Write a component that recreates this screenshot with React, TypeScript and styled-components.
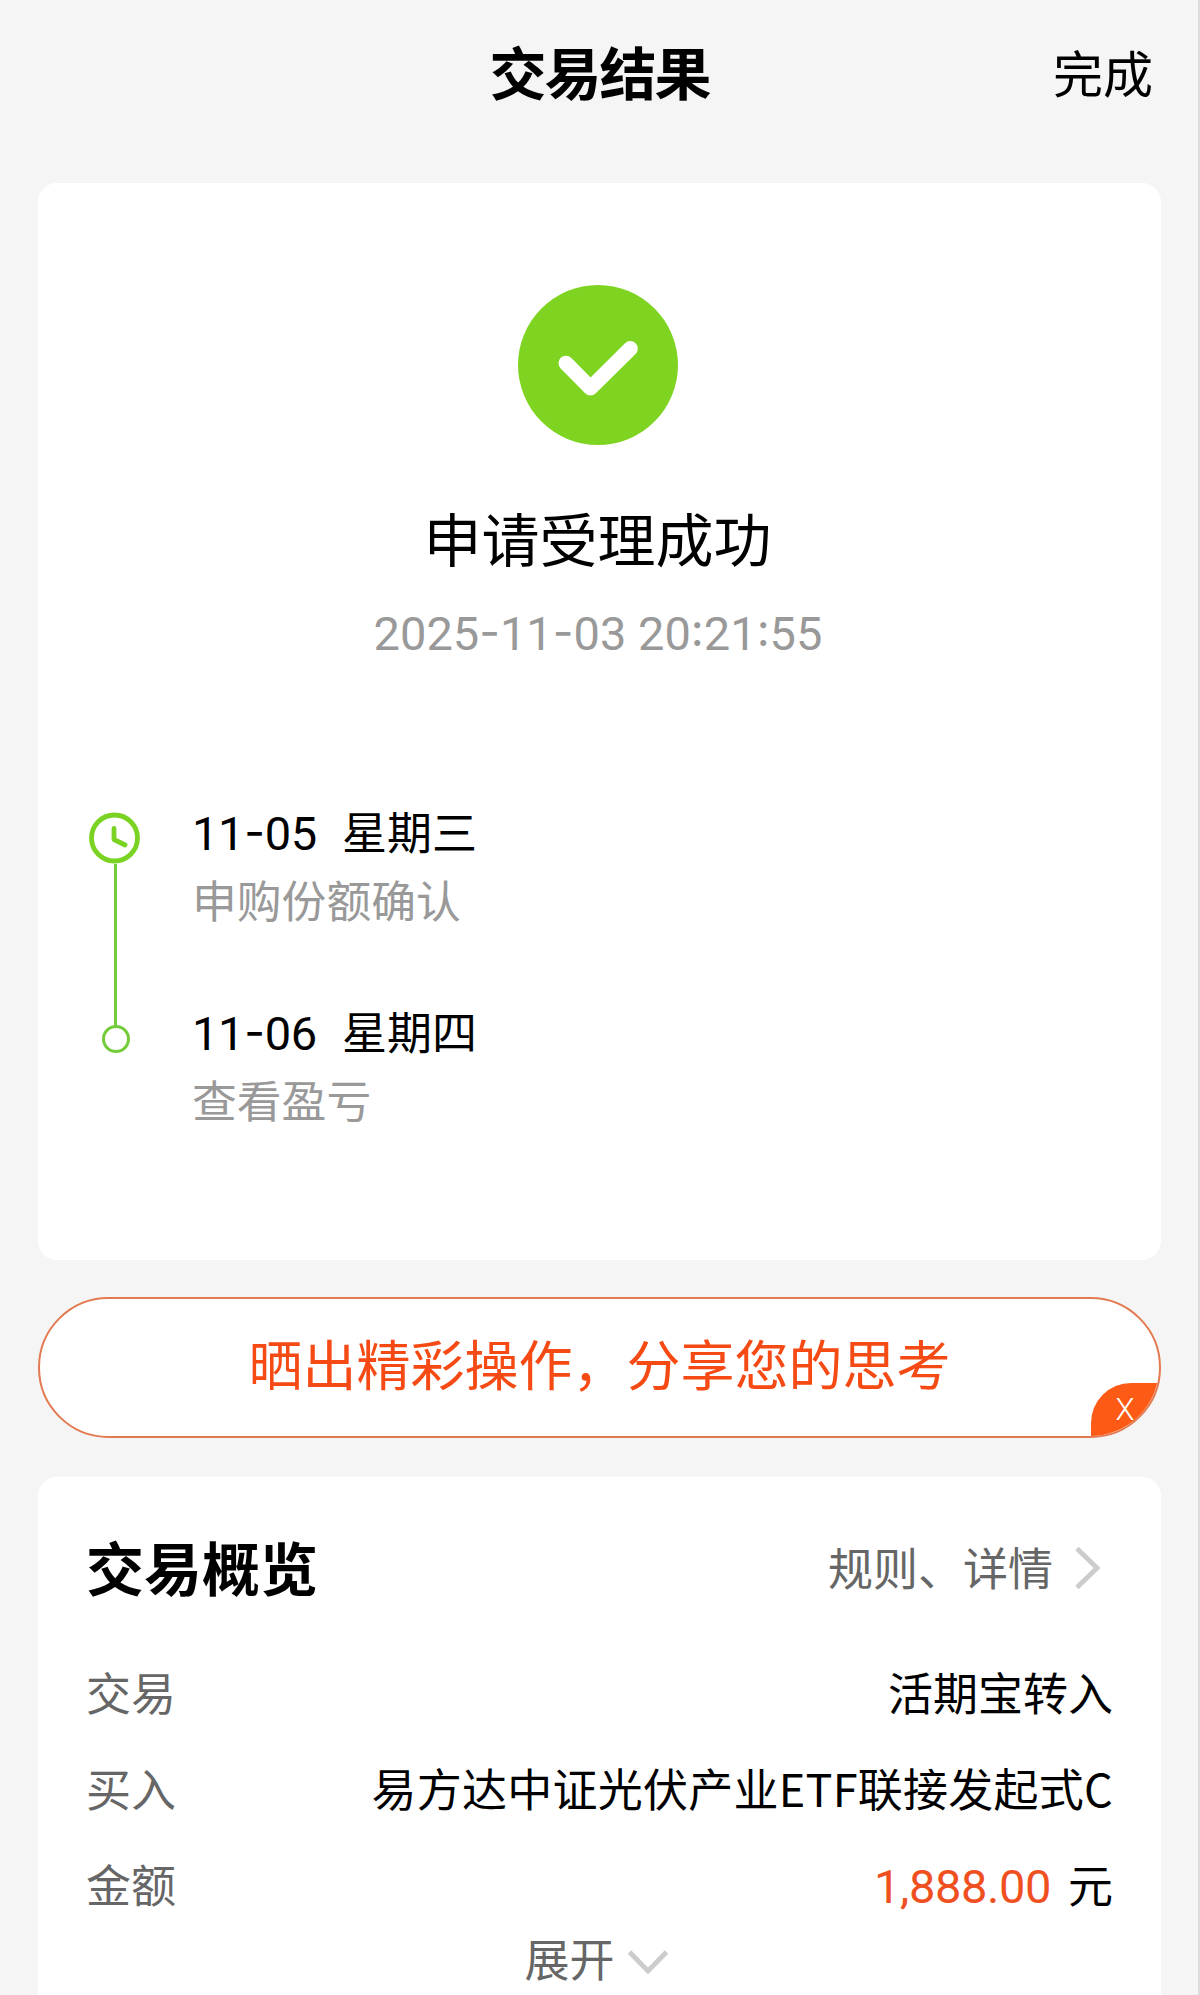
import React from "react";
import styled, { createGlobalStyle } from "styled-components";

const GlobalStyle = createGlobalStyle`
  *, *::before, *::after { box-sizing: border-box; }
  body {
    margin: 0;
    background: #f5f5f5;
    color: #000;
    font-family: "Noto Sans CJK SC", sans-serif;
  }
`;

const Page = styled.main`
  width: 1200px;
  height: 1995px;
  overflow: hidden;
  padding: 0 37px 0 38px;
  border-right: 2px solid #dcdcdc;
  background: #f5f5f5;
  display: flex;
  flex-direction: column;
`;

const Header = styled.header`
  flex: none;
  height: 140px;
  margin-bottom: 43px;
  display: grid;
  grid-template-columns: 1fr auto 1fr;
  align-items: center;
`;

const HeaderTitle = styled.h1`
  grid-column: 2;
  margin: 0;
  font-size: 57px;
  line-height: 80px;
  font-weight: 700;
  letter-spacing: -2px;
`;

const DoneButton = styled.button`
  justify-self: end;
  margin-right: 8px;
  padding: 2px 0 0;
  border: 0;
  background: none;
  color: #000;
  font: 400 50px/80px "Noto Sans CJK SC", sans-serif;
`;

const Card = styled.section`
  flex: none;
  width: 1123px;
  background: #fff;
  border-radius: 19px;
`;

const ResultCard = styled(Card)`
  height: 1077px;
  padding: 102px 51px 0;
  display: flex;
  flex-direction: column;
`;

const SuccessIcon = styled.svg`
  align-self: center;
  width: 160px;
  height: 160px;
  margin-right: 3px;
`;

const ResultTitle = styled.h2`
  margin: 52px 4px 0 0;
  font-size: 58px;
  line-height: 80px;
  font-weight: 400;
  text-align: center;
`;

const ResultTime = styled.p`
  height: 60px;
  margin: 23px 3px 0 0;
  color: #999;
  font-size: 47px;
  line-height: 60px;
  text-align: center;
`;

const Digits = styled.span<{ $spacing?: number }>`
  font-family: Roboto, "Noto Sans CJK SC", sans-serif;
  font-size: 47px;
  letter-spacing: ${(p) => p.$spacing ?? 0}px;
  white-space: pre;
`;

const Separator = styled.span`
  font-family: Inter, sans-serif;
  font-feature-settings: "case" 1;
  font-size: 45px;
`;

const Timeline = styled.div`
  margin-top: 137px;
  display: flex;
  gap: 51px;
`;

const Rail = styled.div`
  width: 52px;
  padding-top: 15px;
  display: flex;
  flex-direction: column;
  align-items: center;
`;

const ClockIcon = styled.svg`
  flex: none;
  width: 52px;
  height: 52px;
`;

const RailLine = styled.div`
  width: 3px;
  height: 161px;
  background: #76cb3a;
`;

const RailDot = styled.div`
  width: 28px;
  height: 28px;
  margin-left: 1px;
  border: 3px solid #76cb3a;
  border-radius: 50%;
`;

const Steps = styled.div`
  display: flex;
  flex-direction: column;
  gap: 64px;
`;

const StepDate = styled.div`
  display: flex;
  align-items: baseline;
  gap: 25px;
  height: 68px;
  font-size: 45px;
  line-height: 68px;
`;

const StepNote = styled.div`
  color: #999;
  font-size: 44.8px;
  line-height: 68px;
`;

const ShareBanner = styled.div`
  position: relative;
  flex: none;
  width: 1123px;
  height: 141px;
  margin: 37px 0 39px;
  border: 2px solid #e27a52;
  border-radius: 71px;
  overflow: hidden;
  background: #fff;
  color: #f64a14;
  font-size: 54px;
  line-height: 128px;
  text-align: center;
`;

const CloseBadge = styled.button`
  position: absolute;
  right: 0;
  bottom: 0;
  width: 68px;
  height: 53px;
  padding: 0;
  border: 0;
  border-top-left-radius: 40px;
  background: #fd5a16;
  color: #fff;
  font: 300 31px/48px Roboto, sans-serif;
`;

const OverviewCard = styled(Card)`
  height: 560px;
  padding: 48px 48px 0;
  display: flex;
  flex-direction: column;
`;

const OverviewHead = styled.div`
  display: flex;
  flex: none;
  align-items: center;
  justify-content: space-between;
  height: 82px;
  margin-bottom: 37px;
`;

const OverviewTitle = styled.h2`
  margin: 0;
  font-size: 58px;
  line-height: 80px;
  font-weight: 700;
`;

const DetailsLink = styled.a`
  display: flex;
  align-items: center;
  gap: 22px;
  padding: 2px 12px 0 0;
  color: #666;
  font-size: 45px;
  line-height: 80px;
`;

const Chevron = styled.svg<{ $w: number; $h: number }>`
  width: ${(p) => p.$w}px;
  height: ${(p) => p.$h}px;
  margin-top: ${(p) => (p.$w > p.$h ? 7 : 1)}px;
  fill: none;
  stroke: #ccc;
  stroke-width: 4.8;
`;

const Row = styled.div`
  display: flex;
  flex: none;
  justify-content: space-between;
  height: 96px;
  font-size: 45px;
  line-height: 96px;
`;

const Label = styled.span`
  color: #666;
`;

const FundName = styled.span`
  letter-spacing: 0.25px;
`;

const Amount = styled.span`
  margin-right: 17px;
  color: #f0501f;
`;

const Expand = styled.button`
  display: flex;
  flex: none;
  align-items: center;
  justify-content: center;
  gap: 13px;
  margin-top: -19px;
  margin-right: 7px;
  padding: 0;
  border: 0;
  background: none;
  color: #666;
  font: 400 45px/90px "Noto Sans CJK SC", sans-serif;
`;

const steps = [
  { date: "11-05", day: "星期三", note: "申购份额确认" },
  { date: "11-06", day: "星期四", note: "查看盈亏" },
];

function Numeric({ text, spacing }: { text: string; spacing?: number }) {
  return (
    <Digits $spacing={spacing}>
      {text
        .split(/([-:])/)
        .map((part, i) => (i % 2 ? <Separator key={i}>{part}</Separator> : part))}
    </Digits>
  );
}

export default function App() {
  return (
    <>
      <GlobalStyle />
      <Page>
        <Header>
          <HeaderTitle>交易结果</HeaderTitle>
          <DoneButton>完成</DoneButton>
        </Header>

        <ResultCard>
          <SuccessIcon viewBox="0 0 160 160">
            <circle cx="80" cy="80" r="80" fill="#7ed421" />
            <path
              d="M48 78.2 72.5 103 112.3 63.6"
              fill="none"
              stroke="#fff"
              strokeWidth="15"
              strokeLinecap="round"
              strokeLinejoin="round"
            />
          </SuccessIcon>
          <ResultTitle>申请受理成功</ResultTitle>
          <ResultTime>
            <Numeric text="2025-11-03 20:21:55" />
          </ResultTime>

          <Timeline>
            <Rail>
              <ClockIcon viewBox="0 0 52 52" fill="none" stroke="#7ad322">
                <circle cx="25.5" cy="26" r="23" strokeWidth="4.8" />
                <path
                  d="M25 16.5V27.5L36 33"
                  strokeWidth="4.8"
                  strokeLinecap="round"
                  strokeLinejoin="round"
                />
              </ClockIcon>
              <RailLine />
              <RailDot />
            </Rail>
            <Steps>
              {steps.map((step) => (
                <div key={step.date}>
                  <StepDate>
                    <Numeric text={step.date} spacing={-0.3} />
                    <span>{step.day}</span>
                  </StepDate>
                  <StepNote>{step.note}</StepNote>
                </div>
              ))}
            </Steps>
          </Timeline>
        </ResultCard>

        <ShareBanner>
          晒出精彩操作，分享您的思考
          <CloseBadge>X</CloseBadge>
        </ShareBanner>

        <OverviewCard>
          <OverviewHead>
            <OverviewTitle>交易概览</OverviewTitle>
            <DetailsLink>
              规则、详情
              <Chevron $w={26} $h={42} viewBox="0 0 26 42">
                <path d="M2 1.5 22 21 2 40.5" />
              </Chevron>
            </DetailsLink>
          </OverviewHead>
          <Row>
            <Label>交易</Label>
            <span>活期宝转入</span>
          </Row>
          <Row>
            <Label>买入</Label>
            <FundName>易方达中证光伏产业ETF联接发起式C</FundName>
          </Row>
          <Row>
            <Label>金额</Label>
            <span>
              <Amount>
                <Numeric text="1,888.00" spacing={-0.4} />
              </Amount>
              元
            </span>
          </Row>
          <Expand>
            展开
            <Chevron $w={40} $h={24} viewBox="0 0 40 24">
              <path d="M1.5 2 20 21 38.5 2" />
            </Chevron>
          </Expand>
        </OverviewCard>
      </Page>
    </>
  );
}
